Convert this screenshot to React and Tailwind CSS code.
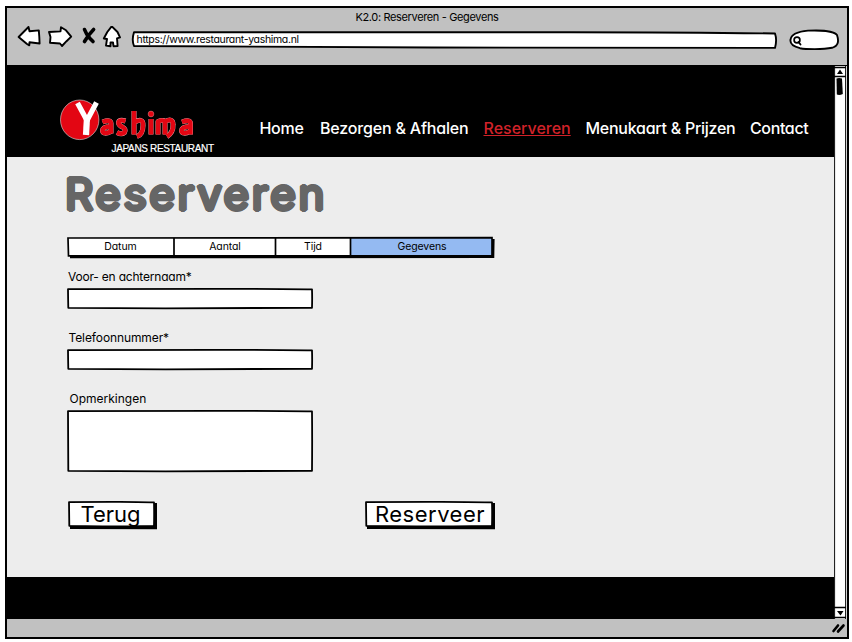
import React from "react";

const NAV = [
  { label: "Home", style: "w-[60.500px] tracking-[-0.3px] text-white" },
  { label: "Bezorgen & Afhalen", style: "w-[163.500px] tracking-[-0.18px] text-white" },
  { label: "Reserveren", style: "w-[102px] text-[#d12229]", underline: true },
  { label: "Menukaart & Prijzen", style: "w-[164.500px] tracking-[-0.26px] text-white" },
  { label: "Contact", style: "tracking-[-0.36px] text-white" },
];

const WORDMARK =
  "M103 121.500Q111.500 118.500 111.500 123V133M111.500 126Q103 126 103 130.500Q104 134.500 111.500 131M126 120.500Q119 118.500 119 122.500Q119.500 125 123 126.500Q127 129 125 132Q122 134.500 117.500 132M134.500 110.500V134M134.500 122Q144 116.500 143.500 125Q143.500 134 137.500 136M151.500 118.500V134M158.500 134V121Q165.500 118 165.500 123V134M165.500 121Q173.500 117 173.500 124Q174 132 167.500 136M182.500 121.500Q191 118.500 191 123V134M191 126Q182 126 182 130.500Q183 134.500 191 131";

/* Slightly uneven pen outline that fills its positioned parent. */
function Outline({ w, h, shadow = false }) {
  return (
    <svg className="absolute left-0 top-0 overflow-visible" width={w} height={h} fill="none">
      {shadow && <path d={`M2 ${h} L${w} ${h + 0.3} L${w} 2`} stroke="#000" strokeWidth="4" />}
      <path
        d={`M1 1.2 Q${w * 0.3} .7 ${w * 0.6} .8 T${w - 1} 1.4 Q${w - 0.7} ${h / 2} ${w - 1} ${h - 1.2} Q${w * 0.6} ${h - 0.6} ${w * 0.4} ${h - 0.7} T1.3 ${h - 1.2} Q1.1 ${h / 2} 1 1.2Z`}
        fill="#fff"
        stroke="#000"
        strokeWidth="1.8"
        strokeLinejoin="round"
      />
    </svg>
  );
}

function Toolbar() {
  return (
    <header className="h-[57px] bg-[#c1c1c1] text-[11px] leading-4">
      <div className="flex h-[18px] justify-center pt-px tracking-[-0.36px]">K2.0: Reserveren - Gegevens</div>
      <div className="flex h-8 items-start">
        <svg className="ml-[10px] h-8 w-[106px]" viewBox="17 26 106 32" fill="#fff" stroke="#000" strokeWidth="1.900" strokeLinejoin="round" strokeLinecap="round">
          <path d="M18.600 37 28.500 27 29.500 31.200 38.800 30.400 39.300 37 39.600 43.500 29.500 42.300 29.300 45.300 27 44Z" />
          <path d="M49 32 60.500 31.400 61 27.200 66 30.300 71.200 36.600 66.500 41.200 62 46 60 43.500 50 42.800 50.500 37Z" />
          <path d="M84.500 29.500Q86 34 90 38.500L93 41.500M93.600 29.500Q89 34 84.500 41.500" strokeWidth="3.600" />
          <path d="M111.700 26.300 117.500 32 120 37.400 117 38.300 117.600 46 113.500 46.200 113 42.500 110.500 42.500 110.500 46.200 106 45.600 107 39 103.800 38.500 107.300 32Z" />
        </svg>
        <div className="relative mt-[6px] ml-[9px] h-4 w-[645px]">
          <svg className="absolute inset-0 overflow-visible" width="645" height="17" fill="#fff" stroke="#000" strokeWidth="1.900" strokeLinejoin="round">
            <path d="M2 .2Q180 .8 360 .3T643 1.500Q645.200 8 643 15.900Q450 16.300 300 15.500T2 14Q-.5 8 2 .2Z" />
          </svg>
          <span className="relative block pl-[4.500px] text-[10.500px] leading-[15px] tracking-[-0.33px]">https://www.restaurant-yashima.nl</span>
        </div>
        <svg className="mt-[2px] ml-[12px] h-6 w-[50px]" viewBox="789 28 50 24" fill="#fff" stroke="#000" strokeWidth="1.900" strokeLinecap="round">
          <path d="M790.500 40C791 34 798 31.500 808 30.600C820 30 834 31 837 35C839 41 838.500 46 832 47.800C823 49.600 806 49.300 800 48.200C793 46.500 790 43.500 790.500 40Z" />
          <circle cx="797" cy="40" r="2.900" strokeWidth="1.700" />
          <path d="m798.500 42 2 2.500" strokeWidth="1.900" />
        </svg>
      </div>
    </header>
  );
}

function Logo() {
  return (
    <svg className="ml-[51px] mt-[31px] h-[60px] w-[160px] shrink-0" viewBox="58 96 160 60">
      <ellipse cx="79.700" cy="118.800" rx="19.200" ry="19.800" fill="#e30613" stroke="#ddd" strokeWidth=".6" />
      <path d="M77.500 102 87 119.500 96.500 101.500" fill="none" stroke="#fff" strokeWidth="5.200" />
      <path d="M87 116 86 134" stroke="#fff" strokeWidth="6.200" />
      <g transform="translate(-.5 -.5)">
        <path d={WORDMARK} fill="none" stroke="#f0b0b4" strokeWidth="5" strokeLinejoin="round" />
        <path d={WORDMARK} fill="none" stroke="#e30613" strokeWidth="4.400" strokeLinejoin="round" />
        <circle cx="151.500" cy="113.500" r="2.900" fill="#e30613" stroke="#f0b0b4" strokeWidth=".4" />
      </g>
      <text x="111.500" y="151" fill="#fff" stroke="#fff" strokeWidth=".2" fontFamily="Liberation Sans, sans-serif" fontSize="10" textLength="102.500" lengthAdjust="spacing">JAPANS RESTAURANT</text>
    </svg>
  );
}

function Scrollbar() {
  return (
    <svg className="h-[553px] w-[13px] shrink-0" viewBox="834 66 13 553">
      <rect x="834" y="66" width="13" height="553" fill="#fff" />
      <path d="M834.500 66V619M845.600 66V619" stroke="#222" strokeWidth="1.200" />
      <path d="M834 67.500H846M834 76.500H846M834 607.500H846M834 617.500H846" stroke="#000" strokeWidth="1.300" />
      <path d="m840 69.500 3 4.500h-6ZM837 611h6.500l-3 4.500Z" fill="#000" />
      <path d="M836.500 78.500Q839 77.500 842 78.500L842.800 94Q839.500 95.500 836.800 94.500Z" fill="#000" />
    </svg>
  );
}

function Field({ label, h, style }) {
  return (
    <label className="block">
      <span className={"block h-4 text-[12px] leading-4 " + style}>{label}</span>
      <span className={"relative mt-[3px] block w-[246px] " + (h > 30 ? "h-[62px]" : "h-[21px]")}>
        <Outline w={246} h={h} />
      </span>
    </label>
  );
}

function Steps() {
  return (
    <div className="relative h-[20px] w-[427px]">
      <svg className="absolute left-0 top-0 overflow-visible" width="427" height="20">
        <path d="M3 20 426 19.700 426.300 2" fill="none" stroke="#000" strokeWidth="2.600" />
        <path d="M1 .8 425 .8V18.800H1Z" fill="#fff" />
        <path d="M284 1H425V18.800H284Z" fill="#94baf2" />
        <path d="M1 1Q200 0 425 .6V18.800Q200 19.400 1.500 18.900ZM107 1V19M208.500 1V19M283.500 1V19" fill="none" stroke="#000" strokeWidth="1.700" />
      </svg>
      <div className="relative flex text-center text-[10.500px] leading-[20px] tracking-[-0.1px]">
        <span className="w-[107px]">Datum</span>
        <span className="w-[101px] pl-px">Aantal</span>
        <span className="w-[76px]">Tijd</span>
        <span className="w-[142px]">Gegevens</span>
      </div>
    </div>
  );
}

export default function App() {
  return (
    <div className="h-[642px] w-[852px] overflow-hidden bg-white pl-[5px] pt-[6px] text-black [font-family:Inter,'Liberation_Sans',sans-serif] [font-feature-settings:'cv11']">
      <div className="h-[633px] w-[844px] border-2 border-black">
        <Toolbar />
        <div className="flex h-[554px] border-t border-black">
          <div className="w-[827px] bg-[#ededed]">
            <div className="flex h-[91px] items-start bg-black">
              <Logo />
              <nav className="mt-[52px] ml-[41.500px] flex whitespace-nowrap text-[16px] leading-5 font-medium">
                {NAV.map((n) => (
                  <a key={n.label} className={n.style + (n.underline ? " underline underline-offset-1" : "")}>{n.label}</a>
                ))}
              </nav>
            </div>
            <main className="h-[420px] pl-[60px] pt-[10px]">
              <h1 className="-ml-[2px] h-[70px] text-[44px] leading-[55px] font-normal tracking-[2.550px] text-[#666] [text-shadow:2px_0_#666,-2px_0_#666,0_2px_#666,0_-2px_#666,1.4px_1.4px_#666,-1.4px_1.4px_#666,1.4px_-1.4px_#666,-1.4px_-1.4px_#666,1px_0_#666,-1px_0_#666,0_1px_#666,0_-1px_#666]">Reserveren</h1>
              <Steps />
              <div className="mt-[12px] flex flex-col gap-[21px]">
                <Field label="Voor- en achternaam*" h={21} style="pl-[1px] tracking-[-0.2px]" />
                <Field label="Telefoonnummer*" h={21} style="pl-[1.500px] tracking-[-0.1px]" />
                <Field label="Opmerkingen" h={62} style="pl-[2.500px]" />
              </div>
              <div className="mt-[29px] ml-px flex gap-[210px]">
                <button className="relative h-[26px] w-[87px] text-[22px] leading-[26px]">
                  <Outline w={87} h={26} shadow />
                  <span className="relative -left-px">Terug</span>
                </button>
                <button className="relative h-[26px] w-[128px] text-[22px] leading-[26px] tracking-[0.5px]">
                  <Outline w={128} h={26} shadow />
                  <span className="relative left-px">Reserveer</span>
                </button>
              </div>
            </main>
            <footer className="h-[42px] bg-black" />
          </div>
          <Scrollbar />
        </div>
        <div className="flex h-[18px] justify-end bg-[#c1c1c1]">
          <svg className="h-[18px] w-4" viewBox="0 0 16 18" stroke="#000" strokeWidth="2.600" strokeLinecap="round">
            <path d="M2.500 12 7 6.500M7 12.500 12.500 6.500" />
          </svg>
        </div>
      </div>
    </div>
  );
}
